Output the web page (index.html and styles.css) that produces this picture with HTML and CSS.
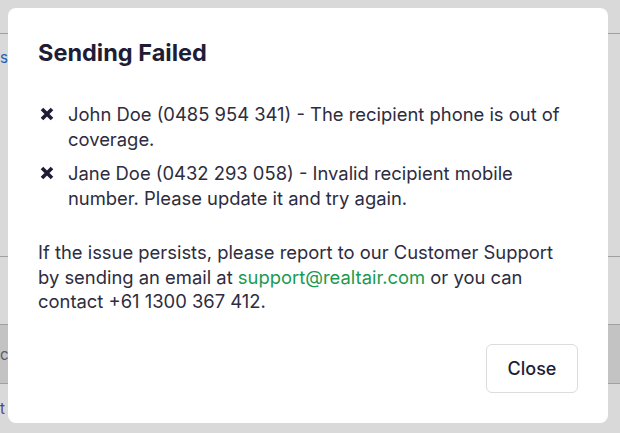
FILE: index.html
```html
<!DOCTYPE html>
<html lang="en">
<head>
  <meta charset="UTF-8" />
  <meta name="viewport" content="width=device-width, initial-scale=1" />
  <title>Sending Failed</title>
  <link rel="stylesheet" href="styles.css">
</head>
<body>

  <!-- Page behind the dialog, dimmed by the overlay -->
  <div class="pagina">
    <div class="linha topo"></div>
    <div class="linha alta"><span class="link">s</span></div>
    <div class="linha media"></div>
    <div class="linha escura"><span class="cinza">c</span></div>
    <div class="linha baixa"><span class="roxo">t</span></div>
  </div>

  <div class="overlay"></div>

  <div class="modal" role="dialog" aria-labelledby="titulo">
    <h2 id="titulo">Sending Failed</h2>

    <ul class="erros">
      <li>
        <svg class="icone-x" viewBox="0 0 14 14" aria-hidden="true">
          <path d="M2 2 L12 12 M12 2 L2 12" />
        </svg>
        <span>John Doe (0485 954 341) - The recipient phone is out of coverage.</span>
      </li>
      <li>
        <svg class="icone-x" viewBox="0 0 14 14" aria-hidden="true">
          <path d="M2 2 L12 12 M12 2 L2 12" />
        </svg>
        <span>Jane Doe (0432 293 058) - Invalid recipient mobile number. Please update it and try again.</span>
      </li>
    </ul>

    <p class="suporte">
      If the issue persists, please report to our Customer Support by sending an email at
      <a href="mailto:support@realtair.com">support@realtair.com</a> or you can contact +61 1300 367 412.
    </p>

    <div class="rodape">
      <button class="fechar">Close</button>
    </div>
  </div>

</body>
</html>
```

FILE: styles.css
```css
html, body {
  margin: 0; padding: 0;
  height: 100%;
  overflow: hidden;
  font-family: 'Inter', 'Liberation Sans', sans-serif;
  font-feature-settings: "pnum";
  background: #fff;
  color: #1f1d35;
}

/* Página de fundo */
.pagina {
  height: 100%;
}

.linha {
  border-bottom: 1px solid #bdbdbd;
  font-size: 15px;
  display: flex;
  align-items: center;
}

.topo { height: 33px; }
.alta { height: 223px; align-items: flex-start; padding-top: 14px; box-sizing: border-box; }
.media { height: 67px; }
.escura { height: 58px; background: #e6e6e6; }
.baixa { height: 48px; border-bottom: none; }

.link { color: #2a6fd6; }
.cinza { color: #6b6b80; }
.roxo { color: #5b4fa8; }

.overlay {
  position: fixed;
  top: 0; left: 0;
  width: 100%;
  height: 100%;
  background: rgba(0, 0, 0, 0.15);
}

.modal {
  position: fixed;
  top: 8px;
  left: 8px;
  width: 600px;
  height: 415px;
  box-sizing: border-box;
  padding: 30px;
  background: #fff;
  border-radius: 8px;
  display: flex;
  flex-direction: column;
}

.modal h2 {
  margin: 0 0 34px;
  font-size: 23.5px;
  line-height: 30px;
  font-weight: 700;
  color: #1f1d35;
}

.erros {
  list-style: none;
  margin: 0;
  padding: 0;
}

.erros li {
  display: flex;
  gap: 14px;
  font-size: 18.4px;
  line-height: 24.5px;
  color: #2e2c40;
  margin-bottom: 10px;
}

.icone-x {
  flex: none;
  width: 14px;
  height: 14px;
  margin: 5px 0 0 2px;
}

.icone-x path {
  stroke: #1f1d35;
  stroke-width: 3.6;
  fill: none;
}

.suporte {
  margin: 20px 0 0;
  font-size: 18.4px;
  line-height: 24.5px;
  color: #2e2c40;
}

.suporte a {
  color: #1c9a4f;
  text-decoration: none;
}

.rodape {
  margin-top: auto;
  display: flex;
  justify-content: flex-end;
}

.fechar {
  width: 92px;
  height: 49px;
  background: #fff;
  border: 1px solid #dcdce0;
  border-radius: 6px;
  font-family: inherit;
  font-size: 18px;
  font-weight: 500;
  color: #1f1d35;
  cursor: pointer;
}
```
